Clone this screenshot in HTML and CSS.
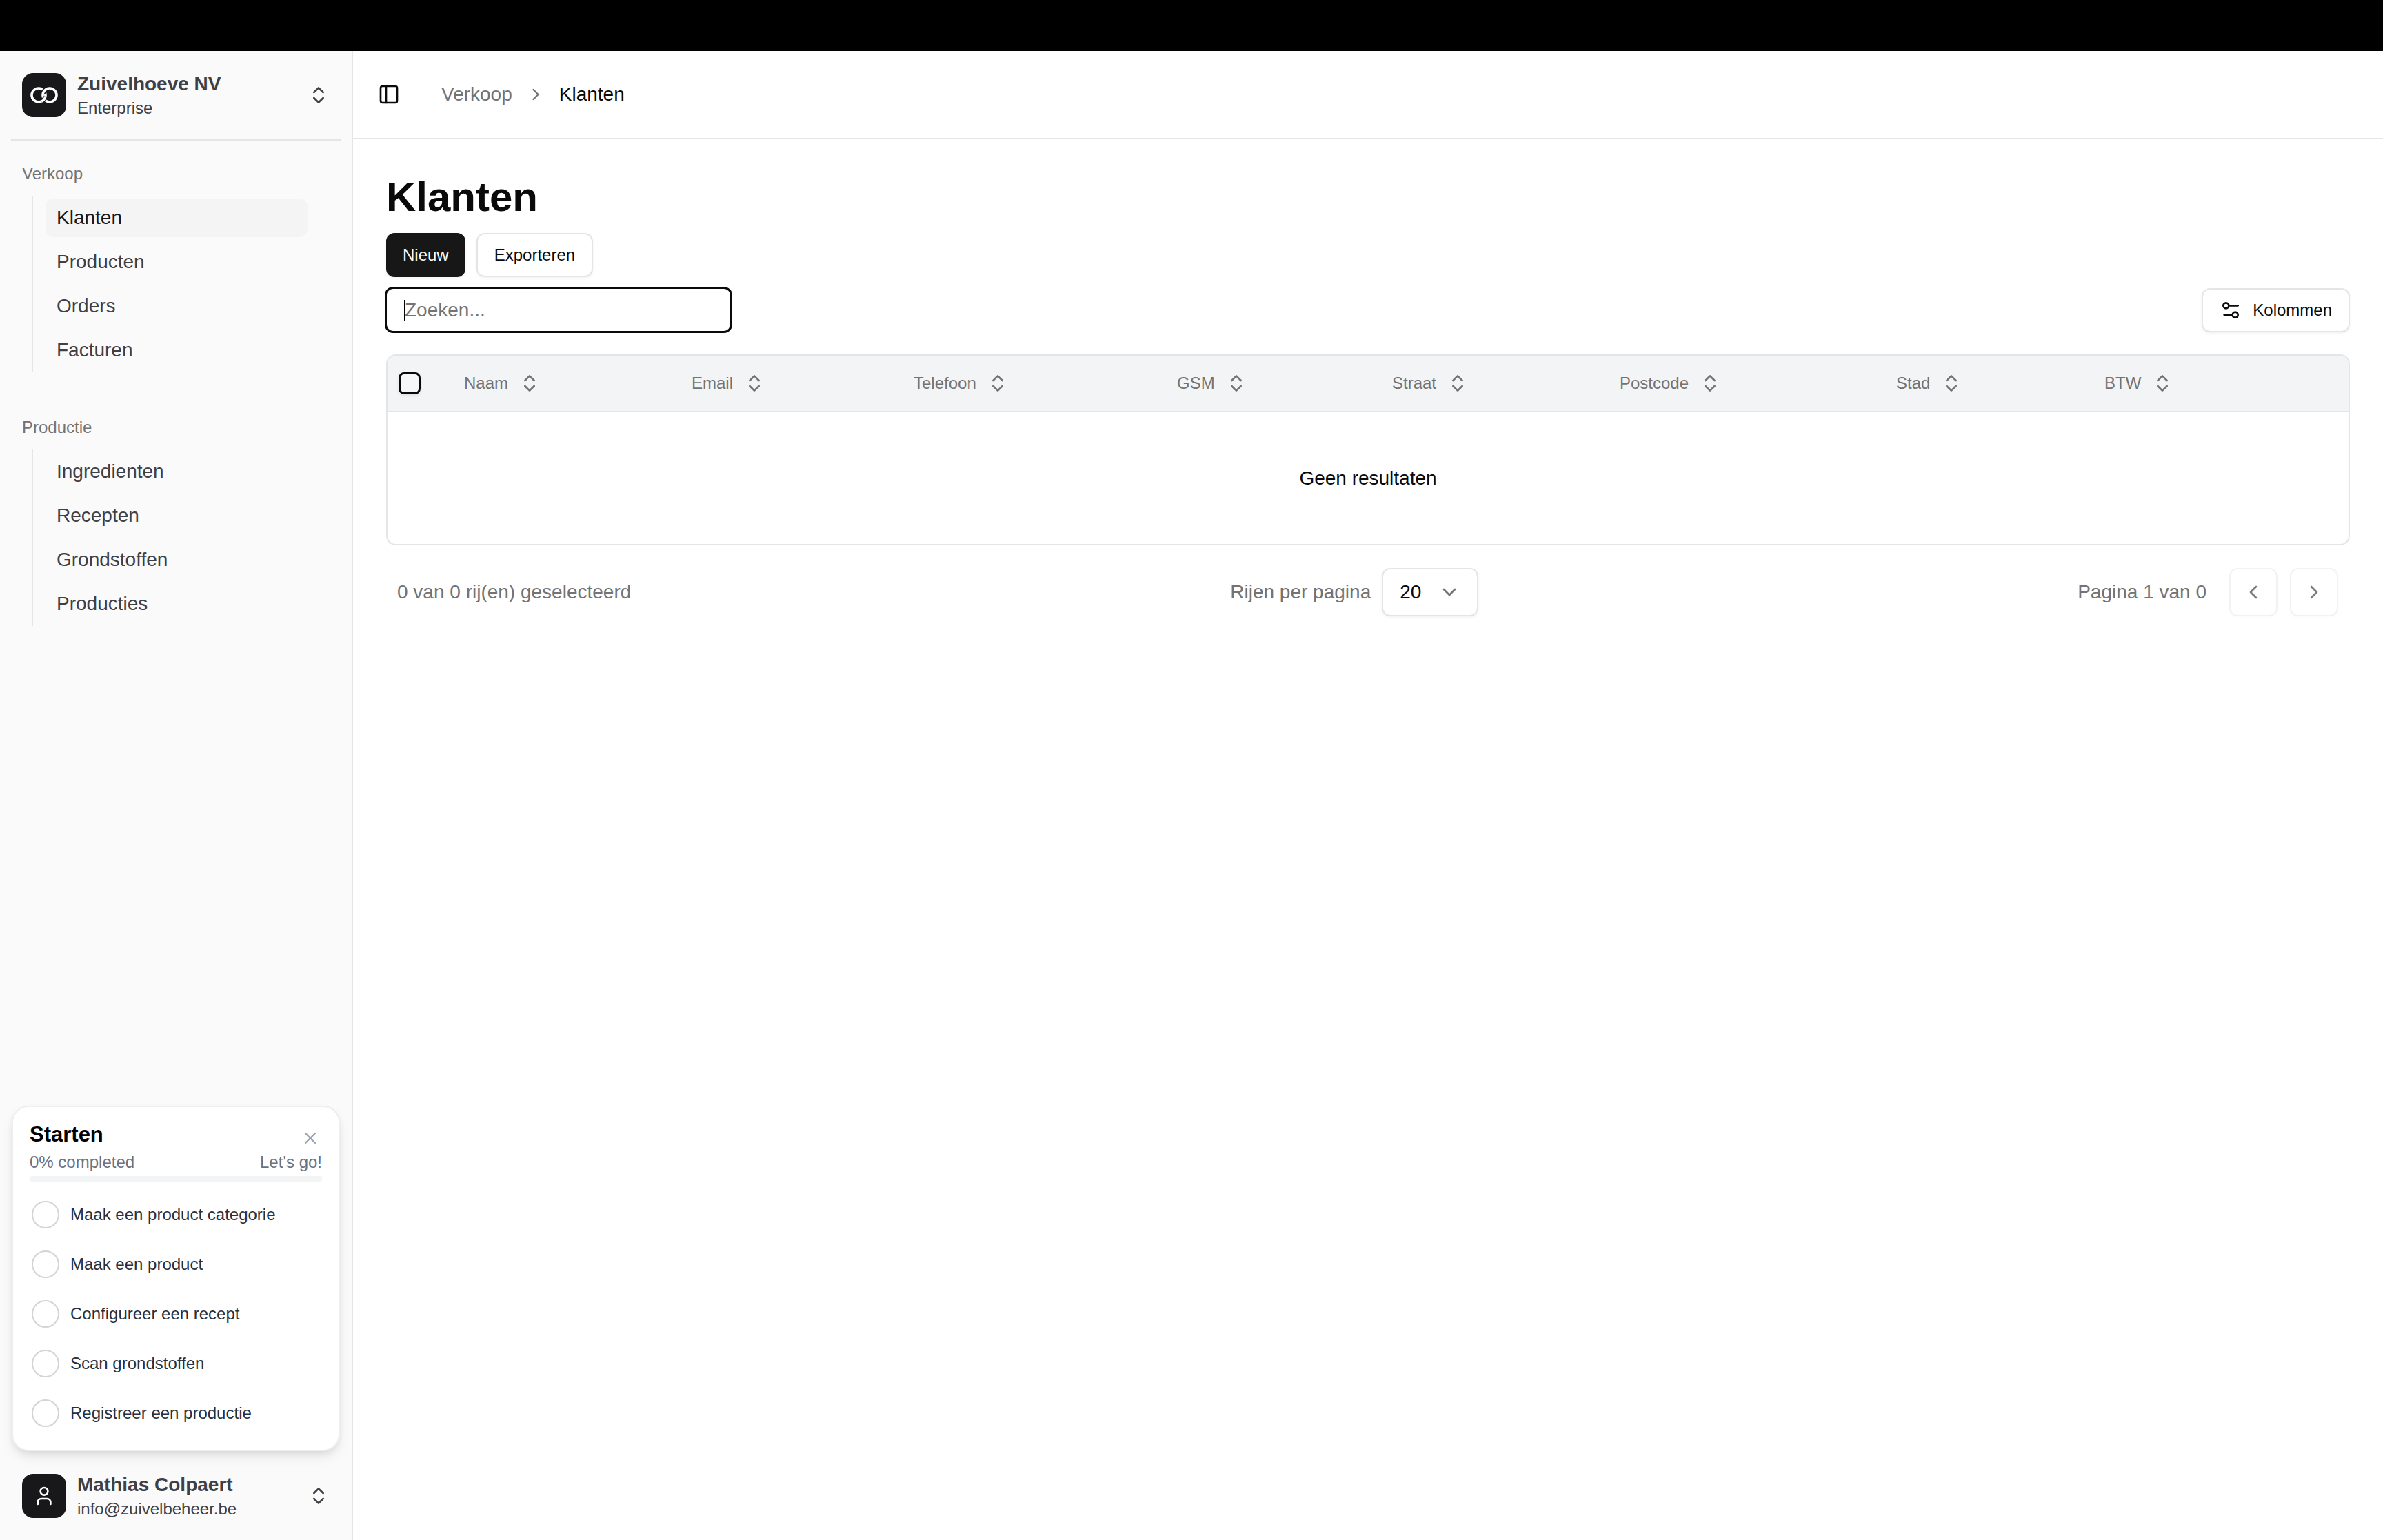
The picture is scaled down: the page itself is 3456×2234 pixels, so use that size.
FILE: index.html
```html
<!DOCTYPE html>
<html lang="nl">
<head>
<meta charset="utf-8">
<title>Klanten</title>
<link rel="stylesheet" href="styles.css">
</head>
<body>
<svg class="defs" width="0" height="0" aria-hidden="true">
  <symbol id="updown" viewBox="0 0 24 24"><path d="m7 15 5 5 5-5"/><path d="m7 9 5-5 5 5"/></symbol>
  <symbol id="left" viewBox="0 0 24 24"><path d="m15 18-6-6 6-6"/></symbol>
  <symbol id="right" viewBox="0 0 24 24"><path d="m9 18 6-6-6-6"/></symbol>
  <symbol id="down" viewBox="0 0 24 24"><path d="m6 9 6 6 6-6"/></symbol>
</svg>
<div class="topbar"></div>
<div class="app">
  <aside class="sidebar">
    <div class="switcher">
      <div class="avatar">
        <svg class="logo" viewBox="0 0 64 64">
          <circle cx="24" cy="32" r="10"/>
          <path class="logo-cut" d="M30.15 30.3A10 10 0 0 1 35.8 22.9"/>
          <circle cx="40" cy="32" r="10"/>
          <path class="logo-cut" d="M33.85 33.7A10 10 0 0 1 28.2 41.1"/>
          <path d="M33.85 33.7A10 10 0 0 1 28.2 41.1"/>
        </svg>
      </div>
      <div class="who">
        <div class="who-name">Zuivelhoeve NV</div>
        <div class="who-sub">Enterprise</div>
      </div>
      <svg class="icon side-updown"><use href="#updown"/></svg>
    </div>
    <nav class="nav">
      <section class="group">
        <div class="group-label">Verkoop</div>
        <ul class="menu">
          <li class="menu-item active">Klanten</li>
          <li class="menu-item">Producten</li>
          <li class="menu-item">Orders</li>
          <li class="menu-item">Facturen</li>
        </ul>
      </section>
      <section class="group">
        <div class="group-label">Productie</div>
        <ul class="menu">
          <li class="menu-item">Ingredienten</li>
          <li class="menu-item">Recepten</li>
          <li class="menu-item">Grondstoffen</li>
          <li class="menu-item">Producties</li>
        </ul>
      </section>
    </nav>
    <div class="card">
      <div class="card-head">
        <div class="card-title">Starten</div>
        <svg class="card-close" viewBox="0 0 24 24"><path d="M18 6 6 18"/><path d="m6 6 12 12"/></svg>
      </div>
      <div class="card-progress"><span>0% completed</span><span>Let's go!</span></div>
      <div class="bar"></div>
      <ul class="tasks">
        <li class="task"><span class="dot"></span>Maak een product categorie</li>
        <li class="task"><span class="dot"></span>Maak een product</li>
        <li class="task"><span class="dot"></span>Configureer een recept</li>
        <li class="task"><span class="dot"></span>Scan grondstoffen</li>
        <li class="task"><span class="dot"></span>Registreer een productie</li>
      </ul>
    </div>
    <div class="switcher user">
      <div class="avatar">
        <svg class="icon user-icon" viewBox="0 0 24 24"><path d="M19 21v-2a4 4 0 0 0-4-4H9a4 4 0 0 0-4 4v2"/><circle cx="12" cy="7" r="4"/></svg>
      </div>
      <div class="who">
        <div class="who-name">Mathias Colpaert</div>
        <div class="who-sub">info@zuivelbeheer.be</div>
      </div>
      <svg class="icon side-updown"><use href="#updown"/></svg>
    </div>
  </aside>
  <main class="main">
    <header class="header">
      <svg class="icon panel" viewBox="0 0 24 24"><rect width="18" height="18" x="3" y="3" rx="2"/><path d="M9 3v18"/></svg>
      <span class="crumb">Verkoop</span>
      <svg class="icon crumb-sep"><use href="#right"/></svg>
      <span class="crumb current">Klanten</span>
    </header>
    <div class="content">
      <h1 class="title">Klanten</h1>
      <div class="actions">
        <button class="btn primary">Nieuw</button>
        <button class="btn">Exporteren</button>
      </div>
      <div class="toolbar">
        <div class="search">
          <span class="caret"></span>
          <span class="placeholder">Zoeken...</span>
        </div>
        <button class="btn">
          <svg class="icon btn-icon" viewBox="0 0 24 24"><path d="M20 7h-9"/><path d="M14 17H5"/><circle cx="17" cy="17" r="3"/><circle cx="7" cy="7" r="3"/></svg>
          Kolommen
        </button>
      </div>
      <div class="table">
        <div class="thead">
          <span class="checkbox"></span>
          <span class="th w-naam">Naam<svg class="icon"><use href="#updown"/></svg></span>
          <span class="th w-email">Email<svg class="icon"><use href="#updown"/></svg></span>
          <span class="th w-tel">Telefoon<svg class="icon"><use href="#updown"/></svg></span>
          <span class="th w-gsm">GSM<svg class="icon"><use href="#updown"/></svg></span>
          <span class="th w-straat">Straat<svg class="icon"><use href="#updown"/></svg></span>
          <span class="th w-post">Postcode<svg class="icon"><use href="#updown"/></svg></span>
          <span class="th w-stad">Stad<svg class="icon"><use href="#updown"/></svg></span>
          <span class="th">BTW<svg class="icon"><use href="#updown"/></svg></span>
        </div>
        <div class="empty">Geen resultaten</div>
      </div>
      <div class="pager">
        <span class="muted">0 van 0 rij(en) geselecteerd</span>
        <div class="pager-group">
          <span class="muted">Rijen per pagina</span>
          <div class="select"><span>20</span><svg class="icon"><use href="#down"/></svg></div>
        </div>
        <div class="pager-group">
          <span class="muted page-label">Pagina 1 van 0</span>
          <span class="page-btn"><svg class="icon"><use href="#left"/></svg></span>
          <span class="page-btn"><svg class="icon"><use href="#right"/></svg></span>
        </div>
      </div>
    </div>
  </main>
</div>
</body>
</html>
```
FILE: styles.css
```css
* { box-sizing: border-box; }
html, body { margin: 0; padding: 0; }
body {
  width: 3456px;
  height: 2234px;
  overflow: hidden;
  background: #fff;
  color: #0a0a0a;
  font-family: "Liberation Sans", Arial, sans-serif;
  display: flex;
  flex-direction: column;
}
ul { list-style: none; margin: 0; padding: 0; }
.defs { position: absolute; }
.icon {
  width: 32px;
  height: 32px;
  flex: none;
  fill: none;
  stroke: currentColor;
  stroke-width: 2;
  stroke-linecap: round;
  stroke-linejoin: round;
}
.topbar { height: 74px; background: #000; flex: none; }
.app { flex: 1; display: flex; min-height: 0; }

/* sidebar */
.sidebar {
  width: 512px;
  flex: none;
  background: #fafafa;
  border-right: 2px solid #e5e5e5;
  display: flex;
  flex-direction: column;
}
.switcher {
  display: flex;
  align-items: center;
  margin: 0 16px;
  padding: 32px 16px 32px;
  height: 130px;
  border-bottom: 2px solid #e5e5e5;
  flex: none;
}
.user { border-bottom: 0; height: 96px; padding: 0 16px; margin-top: 17px; margin-bottom: 16px; }
.avatar {
  width: 64px;
  height: 64px;
  border-radius: 16px;
  background: #18181b;
  color: #fff;
  display: flex;
  align-items: center;
  justify-content: center;
  flex: none;
}
.logo { width: 64px; height: 64px; fill: none; stroke: #fff; stroke-width: 3.6; }
.logo-cut { stroke: #18181b; stroke-width: 6.5; }
.who { margin-left: 16px; padding-top: 2px; flex: 1; min-width: 0; color: #3f3f46; }
.who-name { font-size: 28px; font-weight: 700; line-height: 34px; }
.who-sub { font-size: 24px; line-height: 32px; margin-top: 2px; }
.side-updown { color: #3f3f46; margin-right: 0; }
.nav { padding: 16px 16px 0; }
.group { padding: 16px; }
.group + .group { margin-top: 32px; }
.group-label { font-size: 24px; line-height: 32px; color: #737373; margin-bottom: 16px; }
.menu {
  margin-left: 14px;
  border-left: 2px solid #e5e5e5;
  padding: 4px 0 4px 18px;
  display: flex;
  flex-direction: column;
  gap: 8px;
  width: 400px;
}
.menu-item {
  height: 56px;
  line-height: 56px;
  padding: 0 16px;
  font-size: 28px;
  color: #3f3f46;
  border-radius: 12px;
}
.menu-item.active { background: #f4f4f5; color: #18181b; }

.card {
  margin: auto 17px 0;
  height: 501px;
  background: #fff;
  border: 2px solid #eeeeee;
  border-radius: 24px;
  padding: 18px 24px 0;
  box-shadow: 0 10px 20px -4px rgba(0,0,0,.1), 0 4px 10px -2px rgba(0,0,0,.08);
  flex: none;
}
.card-head { display: flex; justify-content: space-between; align-items: flex-start; height: 44px; }
.card-title { font-size: 31px; font-weight: 700; color: #000; line-height: 44px; }
.card-close { width: 28px; height: 28px; fill: none; stroke: #9ca3af; stroke-width: 2; stroke-linecap: round; margin: 13px 3px 0 0; }
.card-progress { display: flex; justify-content: space-between; font-size: 24px; line-height: 32px; color: #6b7280; margin-top: 2px; }
.bar { height: 8px; background: #f3f4f6; border-radius: 4px; margin-top: 4px; }
.tasks { margin-top: 12px; display: flex; flex-direction: column; }
.task { height: 72px; display: flex; align-items: center; font-size: 24px; color: #27303f; }
.dot { width: 40px; height: 40px; border-radius: 50%; border: 2px solid #d4d4d8; margin: 0 16px 0 3px; flex: none; }

/* main */
.main { flex: 1; min-width: 0; display: flex; flex-direction: column; }
.header { height: 128px; border-bottom: 2px solid #e5e5e5; display: flex; align-items: center; padding: 0 36px; flex: none; font-size: 28px; }
.panel { margin-right: 60px; color: #0a0a0a; }
.crumb { color: #737373; }
.crumb.current { color: #0a0a0a; }
.crumb-sep { color: #737373; width: 28px; height: 28px; margin: 0 20px; }
.content { padding: 48px 48px 0 46px; }
.title { margin: 0 0 0 2px; font-size: 60px; font-weight: 700; line-height: 72px; color: #0a0a0a; }
.actions { display: flex; gap: 16px; margin: 16px 0 0 2px; }
.btn {
  height: 64px;
  padding: 0 24px;
  border: 2px solid #e5e5e5;
  border-radius: 12px;
  background: #fff;
  color: #0a0a0a;
  font: 24px "Liberation Sans", Arial, sans-serif;
  box-shadow: 0 2px 4px rgba(0,0,0,.05);
  display: inline-flex;
  align-items: center;
}
.btn.primary { background: #171717; border-color: #171717; color: #fafafa; padding: 0 22px; }
.btn-icon { margin-right: 16px; }
.toolbar { display: flex; justify-content: space-between; align-items: center; margin-top: 14px; }
.search {
  position: relative;
  width: 504px;
  height: 67px;
  border: 3px solid #0a0a0a;
  border-radius: 12px;
  padding-left: 26px;
  font-size: 28px;
  color: #737373;
  display: flex;
  align-items: center;
}
.caret { position: absolute; left: 25px; top: 16px; width: 2px; height: 31px; background: #000; }
.table { margin: 31px 0 0 2px; height: 277px; border: 2px solid #e5e5e5; border-radius: 14px; overflow: hidden; }
.thead { height: 82px; background: #f3f4f5; border-bottom: 2px solid #e5e5e5; display: flex; align-items: center; padding-left: 16px; }
.checkbox { width: 32px; height: 32px; border: 3px solid #0a0a0a; border-radius: 8px; background: #f6f7f8; box-shadow: 0 2px 4px rgba(0,0,0,.08); margin-right: 63px; flex: none; }
.th { display: flex; align-items: center; gap: 15px; font-size: 24px; color: #737373; flex: none; }
.w-naam { width: 330px; }
.w-email { width: 322px; }
.w-tel { width: 382px; }
.w-gsm { width: 312px; }
.w-straat { width: 330px; }
.w-post { width: 401px; }
.w-stad { width: 302px; }
.empty { height: 192px; display: flex; align-items: center; justify-content: center; font-size: 28px; }
.pager { display: flex; justify-content: space-between; align-items: center; margin: 33px 17px 0 18px; height: 70px; }
.pager-group { display: flex; align-items: center; }
.muted { font-size: 28px; color: #737373; }
.select {
  width: 140px;
  height: 70px;
  margin-left: 16px;
  border: 2px solid #e5e5e5;
  border-radius: 12px;
  box-shadow: 0 2px 4px rgba(0,0,0,.05);
  padding: 0 24px;
  font-size: 28px;
  display: flex;
  align-items: center;
  justify-content: space-between;
}
.select .icon { color: #737373; }
.page-label { margin-right: 33px; }
.page-btn {
  width: 70px;
  height: 70px;
  border: 2px solid #f2f2f2;
  border-radius: 12px;
  box-shadow: 0 2px 4px rgba(0,0,0,.02);
  display: flex;
  align-items: center;
  justify-content: center;
  color: #7a7a7a;
}
.page-btn + .page-btn { margin-left: 18px; }
```
